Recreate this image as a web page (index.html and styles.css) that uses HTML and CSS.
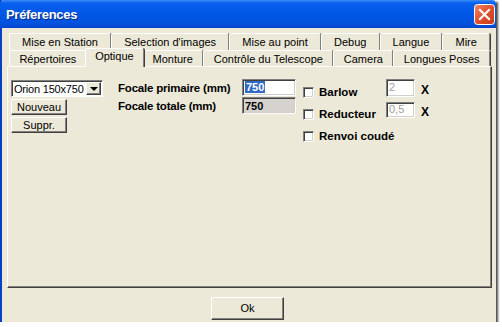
FILE: index.html
```html
<!DOCTYPE html>
<html lang="fr">
<head>
    <meta charset="UTF-8">
    <title>Préferences</title>
    <link rel="stylesheet" href="styles.css">
</head>
<body>
    <div class="window">
        <div class="titlebar">
            <span class="title">Préferences</span>
            <span class="close">
                <svg width="21" height="21" viewBox="0 0 21 21">
                    <defs>
                        <linearGradient id="red" x1="0" y1="0" x2="1" y2="1">
                            <stop offset="0" stop-color="#f08a66"/>
                            <stop offset="0.5" stop-color="#e0502a"/>
                            <stop offset="1" stop-color="#c23b18"/>
                        </linearGradient>
                    </defs>
                    <rect x="0.5" y="0.5" width="20" height="20" rx="3" fill="url(#red)" stroke="#fff"/>
                    <path d="M6 6 L15 15 M15 6 L6 15" stroke="#fff" stroke-width="2.2" stroke-linecap="square"/>
                </svg>
            </span>
        </div>

        <div class="content">
            <div class="tabs">
                <div class="tab-row">
                    <div class="tab">Mise en Station</div>
                    <div class="tab">Selection d'images</div>
                    <div class="tab">Mise au point</div>
                    <div class="tab">Debug</div>
                    <div class="tab">Langue</div>
                    <div class="tab">Mire</div>
                </div>
                <div class="tab-row">
                    <div class="tab">Répertoires</div>
                    <div class="tab active">Optique</div>
                    <div class="tab">Monture</div>
                    <div class="tab">Contrôle du Telescope</div>
                    <div class="tab">Camera</div>
                    <div class="tab">Longues Poses</div>
                </div>
            </div>

            <div class="panel">
                <div class="col-scope">
                    <div class="combo">
                        <span class="combo-text">Orion 150x750</span>
                        <span class="combo-btn"><span class="arrow"></span></span>
                    </div>
                    <div class="btn small">Nouveau</div>
                    <div class="btn small">Suppr.</div>
                </div>

                <div class="col-fields">
                    <span class="field-label">Focale primaire (mm)</span>
                    <span class="edit"><span class="selected">750</span></span>
                    <span class="field-label">Focale totale (mm)</span>
                    <span class="edit readonly">750</span>
                </div>

                <div class="col-options">
                    <span class="check"><span class="box"></span>Barlow</span>
                    <span class="edit mini disabled">2</span>
                    <span class="times">X</span>

                    <span class="check"><span class="box"></span>Reducteur</span>
                    <span class="edit mini disabled second">0,5</span>
                    <span class="times">X</span>

                    <span class="check wide"><span class="box"></span>Renvoi coudé</span>
                </div>
            </div>

            <div class="footer">
                <div class="btn ok">Ok</div>
            </div>
        </div>
    </div>
</body>
</html>
```

FILE: styles.css
```css
* {
    box-sizing: border-box;
}
body {
    margin: 0;
    background: #fff;
    font-family: 'Liberation Sans', Arial, sans-serif;
    font-size: 11px;
    color: #000;
}
.window {
    width: 496px;
    height: 322px;
    background: #ece9d8;
    border-left: 2px solid #0a3fc4;
    box-shadow: 2px 2px 2px rgba(0, 0, 0, 0.7);
    display: flex;
    flex-direction: column;
}
.titlebar {
    height: 28px;
    margin-left: -2px;
    padding: 0 1px 0 6px;
    display: flex;
    align-items: center;
    justify-content: space-between;
    background: linear-gradient(#3b8cf5 0, #0a5fee 3px, #0058e6 45%, #0352dd 85%, #0245c8 100%);
    border-radius: 4px 4px 0 0;
}
.title {
    color: #fff;
    font-weight: bold;
    font-size: 13px;
    letter-spacing: -0.3px;
    text-shadow: 1px 1px 0 #0a2a80;
    padding-top: 1px;
}
.close {
    display: flex;
    margin-top: 1px;
}
.content {
    flex: 1;
    display: flex;
    flex-direction: column;
    padding: 5px 4px 2px 5px;
}

/* tabs */
.tabs {
    margin: 0 2px;
    position: relative;
    z-index: 1;
}
.tab-row {
    display: flex;
    height: 17px;
}
.tab-row + .tab-row {
    height: 16px;
}
.tab {
    flex: 1 1 auto;
    text-align: center;
    line-height: 16px;
    padding: 0 3px;
    white-space: nowrap;
    border-top: 1px solid #fff;
    border-left: 1px solid #fff;
    border-right: 1px solid #808080;
    box-shadow: 1px 0 0 #404040;
    border-radius: 2px 2px 0 0;
}
.tab.active {
    margin: -2px -2px 0 -2px;
    height: 19px;
    line-height: 15px;
    background: #ece9d8;
    position: relative;
    z-index: 2;
}

/* panel */
.panel {
    height: 222px;
    display: flex;
    align-items: flex-start;
    padding: 13px 0 0 3px;
    border: 1px solid;
    border-color: #fff #404040 #404040 #fff;
    box-shadow: inset -1px -1px 0 #808080;
}
.col-scope {
    width: 92px;
    flex-shrink: 0;
    display: flex;
    flex-direction: column;
    align-items: flex-start;
    gap: 2px;
}
.combo {
    width: 92px;
    height: 17px;
    background: #fff;
    display: flex;
    align-items: center;
    justify-content: space-between;
    padding: 0 1px 0 2px;
    border: 1px solid;
    border-color: #808080 #fff #fff #808080;
    box-shadow: inset 1px 1px 0 #404040;
}
.combo-text {
    white-space: nowrap;
    letter-spacing: -0.2px;
    padding-top: 1px;
}
.combo-btn {
    width: 15px;
    height: 13px;
    flex-shrink: 0;
    background: #ece9d8;
    display: flex;
    align-items: center;
    justify-content: center;
    border: 1px solid;
    border-color: #fff #404040 #404040 #fff;
    box-shadow: inset -1px -1px 0 #808080;
}
.arrow {
    width: 0;
    height: 0;
    border-left: 4px solid transparent;
    border-right: 4px solid transparent;
    border-top: 4px solid #000;
}
.btn {
    background: #ece9d8;
    text-align: center;
    border: 1px solid;
    border-color: #fff #404040 #404040 #fff;
    box-shadow: inset -1px -1px 0 #808080;
}
.btn.small {
    width: 56px;
    height: 16px;
    line-height: 14px;
}

.col-fields {
    margin: -1px 0 0 15px;
    display: grid;
    grid-template-columns: 124px 54px;
    row-gap: 1px;
}
.field-label {
    font-weight: bold;
    font-size: 11.5px;
    letter-spacing: -0.2px;
    padding-top: 3px;
    white-space: nowrap;
}
.edit {
    height: 17px;
    background: #fff;
    padding: 1px 2px;
    font-weight: bold;
    border: 1px solid;
    border-color: #808080 #fff #fff #808080;
    box-shadow: inset 1px 1px 0 #404040, inset -1px -1px 0 #d4d0c8;
}
.edit.readonly {
    background: #d6d3ce;
    padding-top: 2px;
}
.selected {
    background: #316ac5;
    color: #fff;
    padding: 0 1px;
}

.col-options {
    margin: -1px 0 0 7px;
    display: grid;
    grid-template-columns: 83px 29px auto;
    grid-template-rows: 22px 22px 23px;
    align-items: start;
}
.check {
    grid-column: 1;
    display: flex;
    align-items: center;
    gap: 5px;
    font-weight: bold;
    font-size: 11.5px;
    padding-top: 7px;
    white-space: nowrap;
}
.check.wide {
    grid-column: 1 / -1;
}
.box {
    width: 11px;
    height: 11px;
    flex-shrink: 0;
    background: #fff;
    border: 1px solid;
    border-color: #808080 #fff #fff #808080;
    box-shadow: inset 1px 1px 0 #404040, inset -1px -1px 0 #d4d0c8;
}
.edit.mini {
    width: 29px;
    height: 18px;
    font-weight: normal;
    color: #a0a0a0;
}
.edit.second {
    margin-top: 1px;
    height: 16px;
    padding-top: 0;
}
.times {
    font-weight: bold;
    font-size: 12px;
    padding: 4px 0 0 6px;
}

/* bottom */
.footer {
    flex: 1;
    display: flex;
    justify-content: center;
    padding-top: 9px;
}
.btn.ok {
    width: 73px;
    height: 23px;
    line-height: 21px;
    margin-left: -4px;
}
```
